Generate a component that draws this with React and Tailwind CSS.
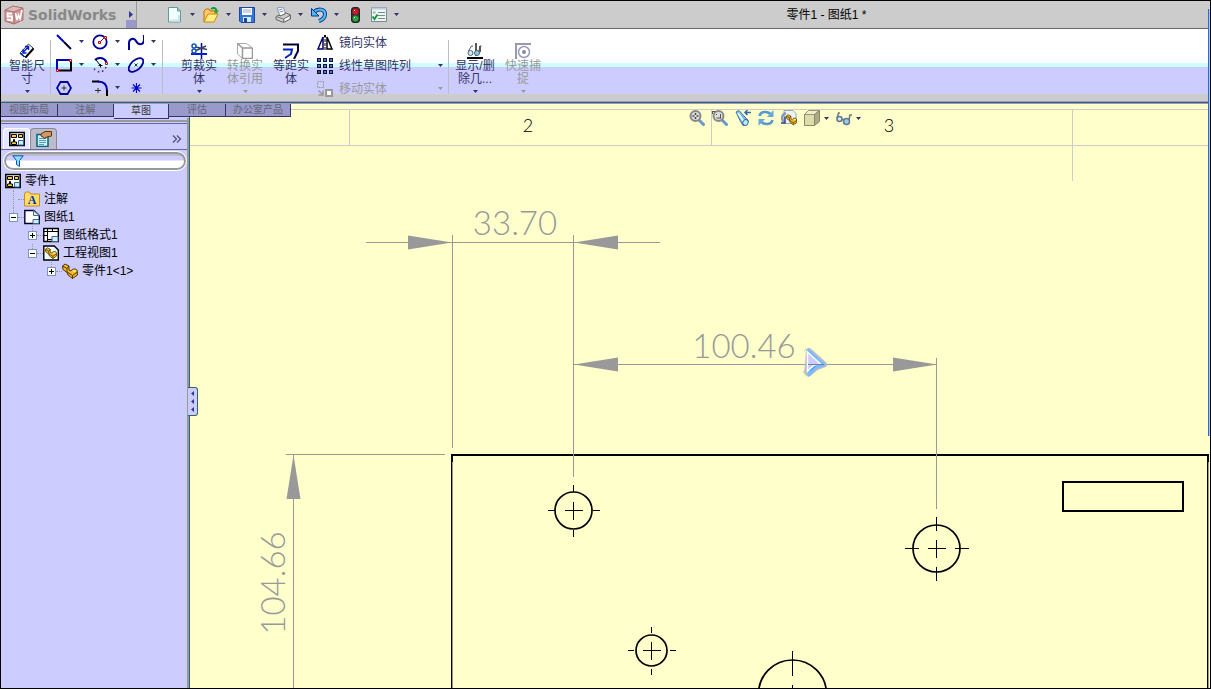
import React from "react";

const Svg = ({ size = "size-4", children }) => (
  <svg
    viewBox="0 0 16 16"
    className={`${size} shrink-0`}
    fill="none"
    aria-hidden="true"
  >
    {children}
  </svg>
);

const Caret = ({ disabled }) => (
  <svg
    viewBox="0 0 5 3"
    className={`w-[5px] h-[3px] shrink-0 ${
      disabled ? "text-[#999999]" : "text-[#333366]"
    }`}
    aria-hidden="true"
  >
    <path d="M0 0h5L2.5 3z" fill="currentColor" />
  </svg>
);

/* ---------- Title bar icons ---------- */

const LogoIcon = () => (
  <svg viewBox="0 0 20 20" className="size-5 shrink-0" aria-hidden="true">
    <path d="M1 5l8-4 10 2v12l-9 4-9-3z" fill="#cc9999" />
    <path d="M1 5l8-4 10 2-9 4z" fill="#ddb8b8" stroke="#b07070" />
    <path d="M10 7v12" stroke="#b07070" />
    <path d="M1 5v11l9 3 9-4V3" fill="none" stroke="#b86868" />
    <path
      d="M8 8.500H3.500V11.500H8v4L3 14.500"
      fill="none"
      stroke="#fff"
      strokeWidth="1.800"
    />
    <path
      d="M11.500 8l1.500 7 1.500-5 1.500 4 2-9"
      fill="none"
      stroke="#fff"
      strokeWidth="1.600"
    />
  </svg>
);

const NewIcon = () => (
  <Svg>
    <path d="M1.500.5h9l3 3.500v11h-12z" fill="#f2ffff" stroke="#669999" />
    <path d="M10.500.5V4h3" fill="#99cccc" stroke="#669999" />
    <path d="M3 13.500h9V8" stroke="#cce6f0" strokeWidth="2" />
  </Svg>
);

const OpenIcon = () => (
  <Svg>
    <path d="M1 15V4l2-2h3l1 2h5v3" fill="#ffcc66" stroke="#cc6600" />
    <path d="M1 15l4-8h10l-4 8z" fill="#ffee88" stroke="#cc8800" />
    <path d="M8 2c3-2 5-1 5.500 2" stroke="#119933" strokeWidth="2" />
    <path d="M10.500 3.500h5.500L13.500 7z" fill="#22aa44" />
  </Svg>
);

const SaveIcon = () => (
  <Svg>
    <path d="M.5.5h15v15H2L.5 14z" fill="#3377dd" stroke="#224499" />
    <path d="M3 1h10v7H3z" fill="#fff" />
    <path d="M4 3h8M4 5h8" stroke="#99aacc" />
    <path d="M4 10h8v5H4z" fill="#cceeff" />
    <path d="M5 11h3v4H5z" fill="#224499" />
  </Svg>
);

const PrintIcon = () => (
  <Svg>
    <path d="M2 1l6-1 3 7-6 2z" fill="#fff" stroke="#8899aa" />
    <path d="M3.500 3l4-1M4.500 5l4-1" stroke="#6699cc" />
    <path d="M1 9.500l3-1.500 1 1 5-2V5.500l5.500 2.500v4l-7 3.500-7.500-3z" fill="#cccccc" stroke="#666" />
    <path d="M1 9.500l7.500 2.500 7-4M8.500 12v3" stroke="#777" />
    <path d="M10 13l4-2" stroke="#fff" strokeWidth="1.500" />
  </Svg>
);

const UndoIcon = () => (
  <Svg>
    <path
      d="M3 5c4-4 11-3 11 2 0 4-3 6-6 7"
      stroke="#003399"
      strokeWidth="4"
    />
    <path
      d="M3 5c4-4 11-3 11 2 0 4-3 6-6 7"
      stroke="#55bbee"
      strokeWidth="2.200"
    />
    <path d="M.5 1.500V9H8z" fill="#55bbee" stroke="#003399" />
  </Svg>
);

const TrafficIcon = () => (
  <Svg>
    <rect x="4.500" y=".5" width="8" height="15" rx="2.500" fill="#333" stroke="#222" />
    <circle cx="8.500" cy="4.500" r="3" fill="#dd1122" />
    <circle cx="8.500" cy="11.500" r="3" fill="#22aa44" />
    <path d="M7 3.500h1M7 10.500h1" stroke="#fff" />
  </Svg>
);

const OptionsIcon = () => (
  <Svg>
    <path d="M.5.5h15v14H.5z" fill="#eef6ee" stroke="#778899" />
    <path d="M.5.5h15v2H.5z" fill="#bbccdd" />
    <path d="M7 5.500h7M7 8.500h7M7 11.500h7" stroke="#778899" />
    <path d="M2 4.500h2.500v2H2z" fill="#99aabb" />
    <path d="M1.500 9.500l2 2.500 3-4.500" stroke="#119944" strokeWidth="2" />
  </Svg>
);

/* ---------- Ribbon icons ---------- */

const SmartDimensionIcon = () => (
  <Svg>
    <path d="M1.500 9.500L9.500 1l5 4.500-8 9z" fill="#fff" stroke="#333" />
    <path d="M4 9.500l5.500-6M4 6.500v3.500h3.500M6 3.500h3.500V7" stroke="#0022cc" strokeWidth="1.500" />
    <path d="M6.500 14.500L14.500 5.500" stroke="#000" strokeWidth="2" />
    <path d="M1 10l4.500 4" stroke="#0033aa" strokeWidth="1.500" />
  </Svg>
);

const LineIcon = () => (
  <Svg>
    <path d="M1 1l7 7" stroke="#0000cc" strokeWidth="2" />
    <path d="M8 8l7 7" stroke="#000033" strokeWidth="2" />
  </Svg>
);

const CircleIcon = () => (
  <Svg>
    <circle cx="8" cy="8" r="6.700" stroke="#000099" strokeWidth="1.800" />
    <path d="M8 8l4.500-4.500" stroke="#333" />
    <path d="M6.500 7.500h2v2h-2zM12.500 2.500h2v2h-2z" fill="#fff" stroke="#cc0000" />
  </Svg>
);

const SplineIcon = () => (
  <Svg>
    <path
      d="M1 16V9c0-4 5-6 7-2s8 5 8-2V1"
      stroke="#000099"
      strokeWidth="2"
    />
  </Svg>
);

const RectIcon = () => (
  <Svg>
    <path d="M1 13V3h13" stroke="#0000bb" strokeWidth="2" />
    <path d="M3 13.500h12V4" stroke="#000" strokeWidth="2" />
    <path d="M13.500 2.500h2v2h-2zM.5 12.500h2v2h-2z" fill="#fff" stroke="#cc0000" />
  </Svg>
);

const ArcIcon = () => (
  <Svg>
    <path d="M3 3c3-3 9-3 11.500 2" stroke="#000099" strokeWidth="2" />
    <path d="M4 3l4 5" stroke="#000" />
    <path d="M6.500 8.500h4M8.500 7v3.500" stroke="#000" />
    <path d="M13.500 5.500h2v2h-2z" fill="#fff" stroke="#cc0000" />
    <path
      d="M14 10c-1 3-4 5-6 5s-6-2-7-5"
      stroke="#333366"
      strokeWidth="1.500"
      strokeDasharray="1.500 3"
    />
  </Svg>
);

const EllipseIcon = () => (
  <Svg>
    <ellipse
      cx="8"
      cy="8"
      rx="8.800"
      ry="4.800"
      transform="rotate(-42 8 8)"
      stroke="#000099"
      strokeWidth="1.800"
    />
    <path d="M6.500 6.500l3 3M9.500 6.500l-3 3" stroke="#333" />
  </Svg>
);

const PolygonIcon = () => (
  <Svg>
    <path d="M4.500 2h7l3.500 6-3.500 6h-7L1 8z" stroke="#000099" strokeWidth="1.800" />
    <path d="M5.500 8h5M8 5.500v5" stroke="#333" />
  </Svg>
);

const FilletIcon = () => (
  <Svg>
    <path d="M0 1.500h7" stroke="#000" strokeWidth="2" />
    <path d="M6 1.500c6 0 9 3 9 9" stroke="#0000aa" strokeWidth="2" />
    <path d="M15 10v6" stroke="#000" strokeWidth="2" />
    <path d="M3 10.500h6M6 8v5" stroke="#333" />
  </Svg>
);

const PointIcon = () => (
  <Svg>
    <path
      d="M8.500 3v10M3.500 8h10M5 4.500l7 7M12 4.500l-7 7"
      stroke="#0000cc"
      strokeWidth="1.200"
    />
  </Svg>
);

const TrimIcon = () => (
  <Svg>
    <path d="M10.500 0v16" stroke="#0000aa" strokeWidth="1.500" />
    <path d="M0 11h16" stroke="#0022cc" strokeWidth="2" />
    <path d="M5 4l11 2.500M5 7.500L15 3" stroke="#334455" strokeWidth="1.500" />
    <circle cx="3" cy="3" r="2" stroke="#1155bb" strokeWidth="1.500" />
    <circle cx="3" cy="8" r="2" stroke="#1155bb" strokeWidth="1.500" />
  </Svg>
);

const ConvertIcon = () => (
  <Svg>
    <path d="M.5.5h9l6 4.500v10.500h-10L.5 11z" fill="#fff" stroke="#aaa" />
    <path d="M.5.5l5 4.500h10M5.500 5v10.500h10V5" stroke="#999" strokeWidth="1.500" />
  </Svg>
);

const OffsetIcon = () => (
  <Svg>
    <path d="M0 1.500h15V8l-4 8" stroke="#000033" strokeWidth="2" />
    <path d="M0 6.500h9L8 11l-6 4" stroke="#0022bb" strokeWidth="2" />
  </Svg>
);

const MirrorIcon = () => (
  <Svg>
    <path d="M6 2L1 14h5z" fill="#fff" stroke="#000066" strokeWidth="1.500" />
    <path d="M10 2l5 12h-5z" fill="#fff" stroke="#000" strokeWidth="1.500" />
    <path d="M7 1h2" stroke="#000" strokeWidth="2" />
    <path d="M8 0v16" stroke="#000" strokeDasharray="3 1" />
  </Svg>
);

const PatternIcon = () => (
  <Svg>
    {[0, 6, 12].map((y) =>
      [0, 6, 12].map((x) => (
        <rect
          key={`${x}-${y}`}
          x={x + 0.5}
          y={y + 0.5}
          width="3"
          height="3"
          fill={x === 0 && y === 12 ? "#555" : "#5577dd"}
          stroke="#111133"
        />
      ))
    )}
  </Svg>
);

const MoveIcon = () => (
  <Svg>
    <path d="M.5.5h6v6h-6z" stroke="#999" strokeDasharray="2 1" />
    <path d="M9 9h6v6H9z" fill="#fff" stroke="#999" strokeWidth="2" />
    <path d="M1.500 9.500l4 4M6 9.500v4.500H1.500" stroke="#999" strokeWidth="1.500" />
  </Svg>
);

const RelationsIcon = () => (
  <Svg>
    <path d="M9 0v13M13 3v6" stroke="#222" strokeWidth="1.500" />
    <path d="M0 15h16" stroke="#000" strokeWidth="2" />
    <circle cx="3.500" cy="10" r="2.500" fill="#cceeff" stroke="#446677" />
    <circle cx="10" cy="10" r="2.500" fill="#99ccdd" stroke="#446677" />
    <path d="M1.500 8l3-5h1.500M12 8l1-5h1.500" stroke="#555" />
  </Svg>
);

const SnapIcon = () => (
  <Svg>
    <path d="M1 16V1h15" stroke="#9999aa" strokeWidth="2" />
    <circle cx="9" cy="9" r="5.500" fill="#fff" stroke="#9999bb" strokeWidth="1.500" />
    <circle cx="9" cy="9" r="2" fill="#8888aa" />
  </Svg>
);

/* ---------- Feature tree icons ---------- */

const DrawingIcon = () => (
  <Svg>
    <path d="M.8 1.500h14.400v13H.8z" fill="#fff" stroke="#000" strokeWidth="1.500" />
    <path d="M2.500 3.500h5v3h-5zM9.500 3.500h4v3h-4z" fill="#ffcc33" stroke="#000" />
    <path d="M4.500 8.500h1V11h2v2.500h-5V11h2z" fill="#ffcc33" stroke="#000" />
    <path d="M9.500 9.500h5v4.500h-5z" fill="#cceeff" stroke="#336699" />
  </Svg>
);

const PropertyIcon = () => (
  <Svg>
    <path d="M1 3.500h11v12H1z" fill="#ccf2ff" stroke="#006677" strokeWidth="1.500" />
    <path d="M3 7.500h7M3 9.500h7M3 11.500h7M3 13.500h5" stroke="#5599bb" />
    <path d="M5 3l4-2.500h6.500V5l-4.500 1-3 1.500-1-1.500-2-1z" fill="#cc9966" stroke="#663300" />
  </Svg>
);

const AnnotationIcon = () => (
  <Svg>
    <path d="M.5 3l1-2h4l1 2h9v12H.5z" fill="#ffdd66" stroke="#cc8822" />
    <text
      x="8"
      y="13"
      textAnchor="middle"
      fill="#0033aa"
      className="font-['Liberation_Serif',serif] text-[12px] font-bold"
    >
      A
    </text>
  </Svg>
);

const SheetIcon = () => (
  <Svg>
    <path d="M.8 1.500h9l5.500 5v8H.8z" fill="#fff" stroke="#000033" strokeWidth="1.400" />
    <path d="M9.500 1.500v5h6z" fill="#ddeeff" stroke="#446688" />
    <path d="M9 10.500h6v4H9z" fill="#cceeff" stroke="#446688" />
  </Svg>
);

const FormatIcon = () => (
  <Svg>
    <path d="M.8 1.500h14.500v13H.8z" fill="#fff" stroke="#000" strokeWidth="1.400" />
    <path d="M1 4.500h14M4.500 1v11.500H9M4 8.500H1M9.500 1v3.500M4.500 12v3" stroke="#000" />
    <path d="M9 9.500h6v5H9z" fill="#cceeff" stroke="#446688" />
  </Svg>
);

/* Angle bracket with a rounded boss, shared by the part and view icons */
const Part = () => (
  <>
    <path
      d="M.5 3L3 1l4 2v4l2 1c1-2 4-3 6-1l.5 5-5 3.500L6 12 5 9.500 1 6.500z"
      fill="#eebb22"
      stroke="#553300"
    />
    <path d="M.5 3L5 5.500V9l5.500 3.500 5-3.500M10.500 12.500v3M5 5.500L7 3" stroke="#553300" />
    <path d="M11 8.500c1-1 2-1 3 0" stroke="#ffee99" strokeWidth="1.500" />
  </>
);

const ViewIcon = () => (
  <Svg>
    <path d="M.8 1h10.500l4 4v10H.8z" fill="#eeffff" stroke="#000" strokeWidth="1.400" />
    <g transform="translate(2 2) scale(.75)">
      <Part />
    </g>
  </Svg>
);

const PartIcon = () => (
  <Svg>
    <Part />
  </Svg>
);

/* ---------- View toolbar icons ---------- */

const ZoomIcon = ({ area }) => (
  <Svg>
    <path d="M10 10l4.500 4.500" stroke="#6699cc" strokeWidth="3" strokeLinecap="round" />
    <circle cx="6.500" cy="6" r="5" fill="#ddd" stroke="#888" strokeWidth="2" />
    {area ? (
      <path d="M.5 1.500h3M.5 1v3M4.500 8h4.500M8.500 4v4.500M4 4.500h1" stroke="#555" />
    ) : (
      <>
        <path d="M3.500 6h6M6.500 3v6" stroke="#444" strokeWidth="1.500" />
        <path d="M5.500 5h2v2h-2z" fill="#eee" />
      </>
    )}
  </Svg>
);

const PreviousViewIcon = () => (
  <Svg>
    <path d="M1 2l3-1.500L9 6l4 4-1 4-4 1.500-3-5z" fill="#77bbdd" stroke="#4477aa" />
    <path d="M3 3l6 9" stroke="#e6faff" strokeWidth="2" />
    <ellipse cx="10.500" cy="12.500" rx="2.500" ry="3" transform="rotate(35 10.500 12.500)" fill="#bbeeff" stroke="#336699" />
    <path d="M16 2.500h-6M12.500 0L10 2.500 12.500 5" stroke="#3366aa" strokeWidth="1.500" />
  </Svg>
);

const RedrawIcon = () => (
  <Svg>
    <path d="M1.500 6c1-5 8-5 11-2" stroke="#5599cc" strokeWidth="2.500" />
    <path d="M14.500 10c-1 5-8 5-11 2" stroke="#5599cc" strokeWidth="2.500" />
    <path d="M15.500 0v7H9zM.5 16V9H7z" fill="#66aadd" />
  </Svg>
);

const SectionIcon = () => (
  <Svg>
    <path d="M3 .5h9l3 3v10H3z" fill="#eef2f2" stroke="#99aaaa" />
    <path d="M5 3c-5 2-5 6-2 9" stroke="#8899bb" strokeWidth="2.500" />
    <path d="M4 6.500V13H0" stroke="#334488" strokeWidth="1.500" />
    <g transform="translate(5 4) scale(.7)">
      <Part />
    </g>
  </Svg>
);

const DisplayStyleIcon = () => (
  <Svg>
    <path d="M.5 4.500h10v11H.5z" fill="#ddddaa" stroke="#888866" />
    <path d="M.5 4.500l4-4h11l-5 4z" fill="#eeeecc" stroke="#999977" />
    <path d="M10.500 4.500l5-4v11l-5 4z" fill="#aaaa88" stroke="#888866" />
  </Svg>
);

const GlassesIcon = () => (
  <Svg>
    <path d="M1 8l1.500-5H4M13 9.500L14 5h2M6 9l2 1" stroke="#777" strokeWidth="1.500" />
    <circle cx="3.500" cy="9" r="2.500" fill="#cceeff" stroke="#667788" strokeWidth="1.500" />
    <circle cx="10.500" cy="11.500" r="3" fill="#99ccee" stroke="#667788" strokeWidth="1.500" />
  </Svg>
);

/* ---------- Data ---------- */

const quickTools = [
  { name: "新建", icon: <NewIcon /> },
  { name: "打开", icon: <OpenIcon /> },
  { name: "保存", icon: <SaveIcon /> },
  { name: "打印", icon: <PrintIcon /> },
  { name: "撤消", icon: <UndoIcon /> },
];

const sketchTools = [
  { name: "直线", icon: <LineIcon />, menu: true },
  { name: "圆", icon: <CircleIcon />, menu: true },
  { name: "样条曲线", icon: <SplineIcon />, menu: true },
  { name: "矩形", icon: <RectIcon />, menu: true },
  { name: "圆弧", icon: <ArcIcon />, menu: true },
  { name: "椭圆", icon: <EllipseIcon />, menu: true },
  { name: "多边形", icon: <PolygonIcon /> },
  { name: "圆角", icon: <FilletIcon />, menu: true },
  { name: "点", icon: <PointIcon /> },
];

const patternTools = [
  { name: "镜向实体", icon: <MirrorIcon /> },
  { name: "线性草图阵列", icon: <PatternIcon />, menu: true },
  { name: "移动实体", icon: <MoveIcon />, menu: true, disabled: true },
];

const tabs = [
  { name: "视图布局", width: "w-[57px]" },
  { name: "注解", width: "w-[56px]" },
  { name: "草图", width: "w-[55px]", active: true },
  { name: "评估", width: "w-[57px]" },
  { name: "办公室产品", width: "w-[65px]" },
];

const tree = [
  { name: "注解", icon: <AnnotationIcon /> },
  {
    name: "图纸1",
    icon: <SheetIcon />,
    open: true,
    children: [
      { name: "图纸格式1", icon: <FormatIcon />, open: false },
      {
        name: "工程视图1",
        icon: <ViewIcon />,
        open: true,
        children: [{ name: "零件1<1>", icon: <PartIcon />, open: false }],
      },
    ],
  },
];

const viewTools = [
  { name: "整屏显示全图", icon: <ZoomIcon /> },
  { name: "局部放大", icon: <ZoomIcon area /> },
  { name: "上一视图", icon: <PreviousViewIcon /> },
  { name: "重画", icon: <RedrawIcon /> },
  { name: "剖面视图", icon: <SectionIcon /> },
  { name: "显示样式", icon: <DisplayStyleIcon />, menu: true },
  { name: "隐藏/显示项目", icon: <GlassesIcon />, menu: true },
];

/* ---------- Layout parts ---------- */

const TitleBar = () => (
  <header className="flex items-center h-7 bg-[#cccccc] border-b border-[#666666] shrink-0">
    <div className="flex items-center gap-1 w-[125px] pl-[3px]">
      <LogoIcon />
      <span className="font-['DejaVu_Sans',sans-serif] text-[14px] leading-5 font-bold text-[#888888]">
        SolidWorks
      </span>
    </div>
    <button
      aria-label="菜单"
      className="flex flex-col w-[11px] h-full border-r border-[#999999]"
    >
      <span className="flex-1 flex items-end justify-center pb-[2px]">
        <svg viewBox="0 0 4 7" className="w-1 h-[7px]">
          <path d="M0 0l4 3.500L0 7z" fill="#333399" />
        </svg>
      </span>
      <span className="h-2 w-full bg-[#9999cc]" />
    </button>
    <div className="flex items-center ml-[30px]">
      {quickTools.map((tool) => (
        <button
          key={tool.name}
          aria-label={tool.name}
          className="flex items-center gap-[7px] w-9"
        >
          {tool.icon}
          <Caret />
        </button>
      ))}
      <button aria-label="重建模型" className="w-6">
        <TrafficIcon />
      </button>
      <button aria-label="选项" className="flex items-center gap-[7px] w-9">
        <OptionsIcon />
        <Caret />
      </button>
    </div>
    <h1 className="flex-1 pl-9 text-center text-[12px] text-black">
      零件1 - 图纸1 *
    </h1>
  </header>
);

const BigTool = ({ name, icon, disabled, menu }) => (
  <button
    disabled={disabled}
    className={`flex flex-col items-center justify-start w-[46px] h-[65px] pt-[14px] text-[12px] leading-[13px] ${
      disabled ? "text-[#999999]" : "text-[#333366]"
    }`}
  >
    {icon}
    <span className="h-[31px] w-full pt-px shrink-0 break-words">{name}</span>
    {menu && <Caret disabled={disabled} />}
  </button>
);

const Divider = () => (
  <div className="w-px h-[54px] mt-[11px] bg-[#bbbbcc] shrink-0" />
);

const Ribbon = () => (
  <section className="shrink-0">
    <div className="flex h-[65px] pl-[3px] bg-[linear-gradient(#ffffff_34px,#ccffff_34px,#ccffff_38px,#ccccff_38px)]">
      <BigTool name="智能尺寸" icon={<SmartDimensionIcon />} menu />
      <Divider />
      <div className="grid grid-cols-[36px_36px_36px] auto-rows-[23px] w-[111px] pl-[5px] pt-px">
        {sketchTools.map((tool) => (
          <button
            key={tool.name}
            aria-label={tool.name}
            className="flex items-center gap-[7px]"
          >
            {tool.icon}
            {tool.menu && <Caret />}
          </button>
        ))}
      </div>
      <Divider />
      <div className="flex ml-[13px]">
        <BigTool name="剪裁实体" icon={<TrimIcon />} menu />
        <BigTool name="转换实体引用" icon={<ConvertIcon />} menu disabled />
        <BigTool name="等距实体" icon={<OffsetIcon />} />
      </div>
      <div className="grid auto-rows-[23px] w-[134px] pl-[3px] pr-[5px] pt-[2px]">
        {patternTools.map((tool) => (
          <button
            key={tool.name}
            disabled={tool.disabled}
            className={`flex items-center gap-[6px] text-[12px] leading-4 ${
              tool.disabled ? "text-[#999999]" : "text-[#333366]"
            }`}
          >
            {tool.icon}
            <span className="flex-1 text-left whitespace-nowrap">
              {tool.name}
            </span>
            {tool.menu && <Caret disabled={tool.disabled} />}
          </button>
        ))}
      </div>
      <Divider />
      <div className="flex gap-[2px] ml-[3px]">
        <BigTool name="显示/删除几..." icon={<RelationsIcon />} menu />
        <BigTool name="快速捕捉" icon={<SnapIcon />} menu disabled />
      </div>
    </div>
    <div className="h-[7px] bg-[#cccccc]" />
    <div className="h-[3px] bg-[#336666] border-y border-[#9999cc]" />
  </section>
);

const Tabs = () => (
  <nav className="relative z-10 flex items-start w-[290px] h-[14px]">
    {tabs.map((tab) => (
      <button
        key={tab.name}
        className={`${tab.width} text-[10px] leading-3 border-r border-b border-[#333366] ${
          tab.active
            ? "h-[15px] bg-[#ccccff] text-[#333333]"
            : "h-[13px] bg-[#9999cc] text-[#666677]"
        }`}
      >
        {tab.name}
      </button>
    ))}
  </nav>
);

const TreeItem = ({ item }) => (
  <li>
    <div className="flex items-center h-[18px]">
      <div className="flex flex-col items-center w-[9px] h-full">
        <span className="flex-1 border-l border-dotted border-[#999999]" />
        {item.open !== undefined && (
          <>
            <button
              aria-label={item.open ? "折叠" : "展开"}
              className="size-[9px] bg-white border border-[#7799bb]"
            >
              <svg viewBox="0 0 7 7" className="size-[7px]">
                <path
                  d={item.open ? "M1 3.500h5" : "M1 3.500h5M3.500 1v5"}
                  stroke="#000"
                />
              </svg>
            </button>
            <span className="flex-1" />
          </>
        )}
      </div>
      <span className="w-[6px] border-t border-dotted border-[#999999]" />
      {item.icon}
      <span className="pl-1 whitespace-nowrap">{item.name}</span>
    </div>
    {item.children && (
      <ul className="pl-[19px]">
        {item.children.map((child) => (
          <TreeItem key={child.name} item={child} />
        ))}
      </ul>
    )}
  </li>
);

const FeaturePanel = () => (
  <div className="flex-1 bg-[#ccccff] border-r-2 border-[#999999] pt-[2px]">
    <div className="h-1 border-t-2 border-b border-t-[#999999] border-b-[#666699]" />
    <div className="flex items-end h-[26px] pl-[2px] pr-[5px] border-b border-[#666699]">
      <button
        aria-label="特征管理器"
        className="flex items-center justify-center w-[27px] h-[21px] bg-[#e6e6ff] border border-b-0 border-white rounded-t"
      >
        <DrawingIcon />
      </button>
      <button
        aria-label="属性管理器"
        className="flex items-center justify-center w-[27px] h-[21px] bg-[#bbbbcc] border border-b-0 border-[#888899] rounded-t"
      >
        <PropertyIcon />
      </button>
      <button aria-label="更多" className="ml-auto mb-[6px]">
        <svg viewBox="0 0 10 8" className="w-[10px] h-2" fill="none">
          <path d="M1 .5L4.500 4 1 7.500M5 .5L8.500 4 5 7.500" stroke="#555577" strokeWidth="1.300" />
        </svg>
      </button>
    </div>
    <label className="flex items-center gap-1 h-[18px] ml-[3px] mr-px mt-[2px] pl-[6px] bg-[linear-gradient(#bbbbcc_2px,#ccccff_2px,#ccccff_6px,#ffffff_7px)] border-2 border-[#999999] rounded-full outline outline-1 outline-white">
      <svg viewBox="0 0 12 12" className="size-[12px] shrink-0">
        <path d="M.8.8h10.400L7.500 5.500v6l-3-2v-4z" fill="#99ddff" stroke="#0055bb" />
      </svg>
      <input
        aria-label="过滤"
        className="w-full min-w-0 bg-transparent text-[12px] leading-3 outline-none"
      />
    </label>
    <div className="pt-[2px] text-[12px] leading-[18px] text-black">
      <div className="flex items-center gap-1 h-[18px] pl-1">
        <DrawingIcon />
        <span>零件1</span>
      </div>
      <ul className="pl-2">
        {tree.map((item) => (
          <TreeItem key={item.name} item={item} />
        ))}
      </ul>
    </div>
  </div>
);

/* ---------- Drawing sheet ---------- */

const ARROW = "M0 0L44 -7V7z";

const Hole = ({ x, y, r, inner, outer }) => (
  <g transform={`translate(${x} ${y})`} stroke="#000">
    <circle r={r} fill="none" strokeWidth="1.700" />
    <path
      d={`M-9 0H9M0 -9V9M${-outer} 0H${-inner}M${inner} 0H${outer}M0 ${-outer}V${-inner}M0 ${inner}V${outer}`}
      shapeRendering="crispEdges"
    />
  </g>
);

const Sheet = () => (
  <svg className="absolute inset-0 w-full h-full" fill="none">
    <g transform="translate(-190 -104)">
      {/* Sheet frame and zones */}
      <path
        d="M190 109.500H2400M190 145.500H2400M349.500 109V145M711.500 109V145M1072.500 109V181"
        stroke="#cccccc"
        shapeRendering="crispEdges"
      />
      <g
        fill="#000"
        textAnchor="middle"
        className="font-[Lato,sans-serif] text-[18px] font-light"
      >
        <text x="528" y="132">2</text>
        <text x="889" y="132">3</text>
      </g>

      {/* Part outline */}
      <g stroke="#000" shapeRendering="crispEdges">
        <path d="M451 455H1208M452 454V462M1208 454V462" strokeWidth="2" />
        <path d="M451.500 455V2000M1207.500 455V2000" />
        <rect x="1063" y="482" width="120" height="29" strokeWidth="2" />
      </g>
      <path
        d="M452.500 462V2000M1208.500 462V2000"
        stroke="#999"
        shapeRendering="crispEdges"
      />

      {/* Holes */}
      <Hole x={573.5} y={510.5} r={18.5} inner={19} outer={26} />
      <Hole x={936.5} y={548.5} r={23.5} inner={18} outer={32} />
      <Hole x={651.5} y={650.5} r={15.5} inner={18} outer={24} />
      <circle cx="792.500" cy="694" r="34" stroke="#000" strokeWidth="1.700" />
      <path d="M792.500 651V676M792.500 685V702" stroke="#000" />

      {/* Dimensions */}
      <g stroke="#999" shapeRendering="crispEdges">
        <path d="M366 242.500H660M452.500 235V448M573.500 235V477" />
        <path d="M574 364.500H936M936.500 358V509" />
        <path d="M286 454.500H445M293.500 455V2000" />
      </g>
      <g fill="#999">
        <path d={ARROW} transform="translate(452 242.500) rotate(180)" />
        <path d={ARROW} transform="translate(574 242.500)" />
        <path d={ARROW} transform="translate(574 364.500)" />
        <path d={ARROW} transform="translate(937 364.500) rotate(180)" />
        <path d={ARROW} transform="translate(293.500 455) rotate(90)" />
      </g>
      <g
        fill="#999"
        textAnchor="middle"
        className="font-[Lato,sans-serif] text-[33px] font-light"
      >
        <text x="515" y="235">33.70</text>
        <text x="744" y="358">100.46</text>
        <text transform="translate(285 583) rotate(-90)">104.66</text>
      </g>

      {/* Pointer */}
      <path
        d="M809 351l15 13.500-8 3-7 6-2-1 1-8z"
        stroke="#bbbbcc"
        strokeWidth="6"
        strokeLinejoin="round"
      />
      <path d="M809 351l15 13.500-8 3-7 7z" fill="#3399ff" stroke="#77bbff" strokeWidth="2.500" />
      <path d="M807.500 352l13 12-6 1-7 6z" fill="#ccccff" stroke="#fff" strokeWidth="1.500" />
      <path d="M808 364.500h16" stroke="#7777aa" />
      <path d="M804 351l2-2M803 371l3 4" stroke="#aaddbb" />
    </g>
  </svg>
);

const ViewToolbar = () => (
  <div className="absolute top-[6px] left-[499px] flex gap-[7px]">
    {viewTools.map((tool) => (
      <button
        key={tool.name}
        aria-label={tool.name}
        className="flex items-center gap-1"
      >
        {tool.icon}
        {tool.menu && <Caret />}
      </button>
    ))}
  </div>
);

const App = () => (
  <div className="relative flex flex-col h-screen overflow-hidden border border-black bg-[#cccccc] font-['Liberation_Sans','Noto_Sans_CJK_SC',sans-serif]">
    <TitleBar />
    <Ribbon />
    <main className="flex flex-1 min-h-0">
      <aside className="flex flex-col w-[188px] shrink-0 bg-[#ccccff]">
        <Tabs />
        <FeaturePanel />
      </aside>
      <div className="relative flex-1 bg-[#ffffcc] border-l border-[#336666]">
        <Sheet />
        <ViewToolbar />
        <button
          aria-label="折叠面板"
          className="absolute top-[283px] left-[-2px] flex flex-col items-center justify-center gap-[3px] w-[10px] h-[29px] bg-[#ccccff] border border-l-0 border-[#336666] rounded-r-[3px]"
        >
          {[0, 1, 2].map((i) => (
            <svg key={i} viewBox="0 0 3 5" className="w-[3px] h-[5px]">
              <path d="M3 0v5L0 2.500z" fill="#333399" />
            </svg>
          ))}
        </button>
      </div>
    </main>
    {/* Edge of the window behind */}
    <div className="absolute top-2 right-0 w-[2px] h-[427px] bg-[#99ccff] border-l border-[#3366cc]" />
  </div>
);

export default App;
